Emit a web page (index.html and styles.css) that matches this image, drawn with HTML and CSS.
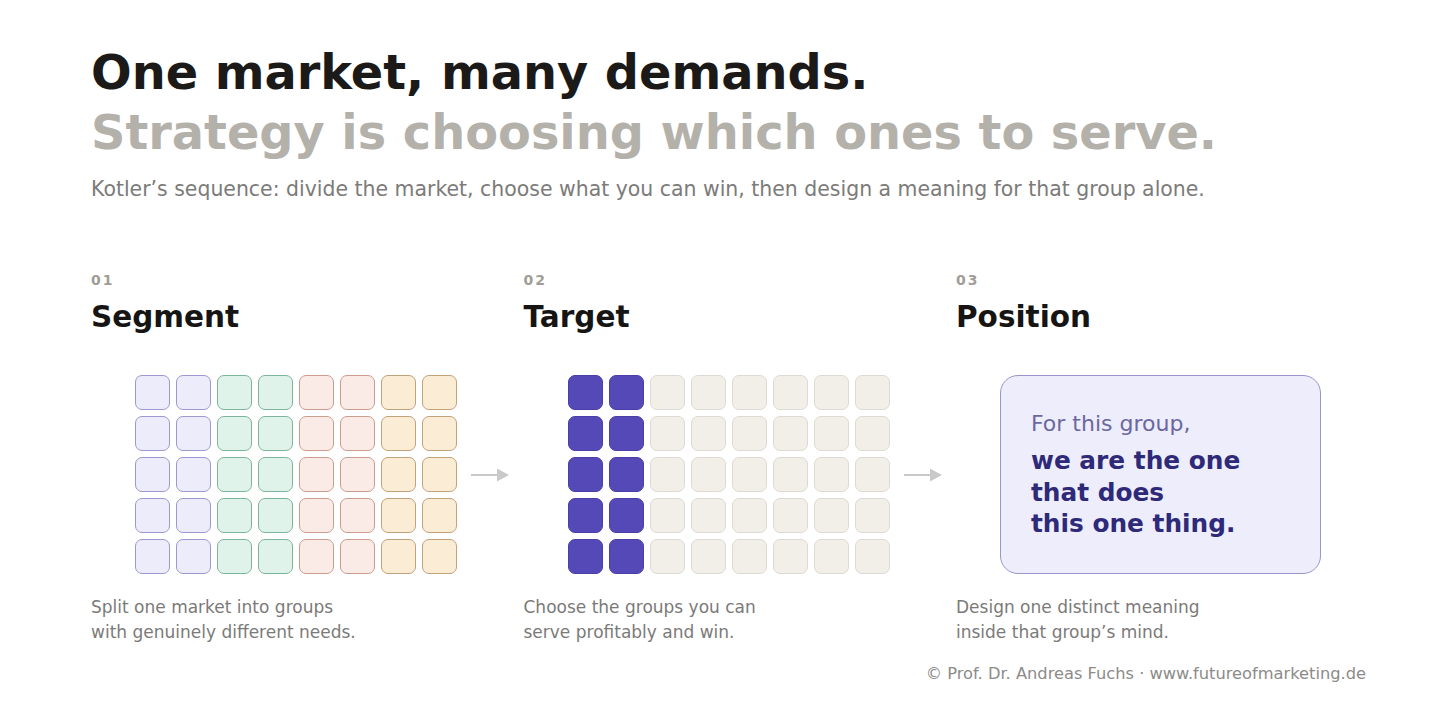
FILE: index.html
```html
<!DOCTYPE html>
<html lang="en">
<head>
<meta charset="utf-8">
<title>One market, many demands.</title>
<link rel="stylesheet" href="styles.css">
</head>
<body>
<main class="page">
  <header class="hero">
    <h1 class="headline">
      <span class="headline-main">One market, many demands.</span>
      <span class="headline-sub">Strategy is choosing which ones to serve.</span>
    </h1>
    <p class="lede">Kotler’s sequence: divide the market, choose what you can win, then design a meaning for that group alone.</p>
  </header>

  <section class="steps">
    <article class="step">
      <div class="step-num">01</div>
      <h2 class="step-title">Segment</h2>
      <div class="visual">
        <div class="cells seg">
          <i></i><i></i><i></i><i></i><i></i><i></i><i></i><i></i>
          <i></i><i></i><i></i><i></i><i></i><i></i><i></i><i></i>
          <i></i><i></i><i></i><i></i><i></i><i></i><i></i><i></i>
          <i></i><i></i><i></i><i></i><i></i><i></i><i></i><i></i>
          <i></i><i></i><i></i><i></i><i></i><i></i><i></i><i></i>
        </div>
        <svg class="arrow" width="38" height="14" viewBox="0 0 38 14" aria-hidden="true">
          <line x1="0" y1="7" x2="27" y2="7" stroke="#c9c9c9" stroke-width="2"/>
          <polygon points="26,0.5 38,7 26,13.5" fill="#c9c9c9"/>
        </svg>
      </div>
      <p class="step-desc">Split one market into groups<br>with genuinely different needs.</p>
    </article>

    <article class="step">
      <div class="step-num">02</div>
      <h2 class="step-title">Target</h2>
      <div class="visual">
        <div class="cells tgt">
          <i></i><i></i><i></i><i></i><i></i><i></i><i></i><i></i>
          <i></i><i></i><i></i><i></i><i></i><i></i><i></i><i></i>
          <i></i><i></i><i></i><i></i><i></i><i></i><i></i><i></i>
          <i></i><i></i><i></i><i></i><i></i><i></i><i></i><i></i>
          <i></i><i></i><i></i><i></i><i></i><i></i><i></i><i></i>
        </div>
        <svg class="arrow" width="38" height="14" viewBox="0 0 38 14" aria-hidden="true">
          <line x1="0" y1="7" x2="27" y2="7" stroke="#c9c9c9" stroke-width="2"/>
          <polygon points="26,0.5 38,7 26,13.5" fill="#c9c9c9"/>
        </svg>
      </div>
      <p class="step-desc">Choose the groups you can<br>serve profitably and win.</p>
    </article>

    <article class="step">
      <div class="step-num">03</div>
      <h2 class="step-title">Position</h2>
      <div class="visual">
        <div class="claim">
          <div class="claim-intro">For this group,</div>
          <div class="claim-main">we are the one<br>that does<br>this one thing.</div>
        </div>
      </div>
      <p class="step-desc">Design one distinct meaning<br>inside that group’s mind.</p>
    </article>
  </section>

  <footer class="credit">© Prof. Dr. Andreas Fuchs · www.futureofmarketing.de</footer>
</main>
</body>
</html>
```

FILE: styles.css
```css
* { box-sizing: border-box; }

html, body {
  margin: 0;
  padding: 0;
  background: #ffffff;
}

body {
  font-family: "DejaVu Sans", "Liberation Sans", sans-serif;
  color: #1a1a1a;
}

.page {
  width: 1456px;
  height: 714px;
  padding: 43px 90px 0 91px;
  display: flex;
  flex-direction: column;
  overflow: hidden;
}

.headline {
  margin: 0;
  font-size: 47.8px;
  line-height: 60px;
  font-weight: 700;
  display: flex;
  flex-direction: column;
}

.headline-main { color: #1b1a19; }
.headline-sub { color: #b4b1ab; }

.lede {
  margin: 14px 0 0;
  font-size: 20.45px;
  line-height: 25px;
  color: #7c7b79;
}

.steps {
  margin-top: 70px;
  display: grid;
  grid-template-columns: repeat(3, 410px);
  column-gap: 22.5px;
}

.step {
  display: flex;
  flex-direction: column;
}

.step-num {
  font-size: 14px;
  line-height: 16px;
  font-weight: 700;
  letter-spacing: 2px;
  color: #a09d97;
}

.step-title {
  margin: 11px 0 0;
  font-size: 29.5px;
  line-height: 36px;
  font-weight: 700;
  color: #161514;
}

.visual {
  margin-top: 40px;
  height: 199px;
  padding-left: 44px;
  display: flex;
  align-items: center;
}

.cells {
  display: grid;
  grid-template-columns: repeat(8, 35px);
  grid-auto-rows: 35px;
  gap: 6px;
  flex-shrink: 0;
}

.cells i {
  display: block;
  border-radius: 7px;
  border: 1px solid #ccc;
}

/* Segment colours, two columns per group */
.seg i:nth-child(8n+1), .seg i:nth-child(8n+2) {
  background: #ececfb;
  border-color: #9d98d2;
}
.seg i:nth-child(8n+3), .seg i:nth-child(8n+4) {
  background: #dff3ea;
  border-color: #7db59c;
}
.seg i:nth-child(8n+5), .seg i:nth-child(8n+6) {
  background: #fbebe6;
  border-color: #cc9d8f;
}
.seg i:nth-child(8n+7), .seg i:nth-child(8n+8) {
  background: #fbecd6;
  border-color: #c2a27a;
}

/* Target: first two columns chosen */
.tgt i {
  background: #f2efe9;
  border-color: #dedad3;
}
.tgt i:nth-child(8n+1), .tgt i:nth-child(8n+2) {
  background: #5549b8;
  border-color: #4a3fa9;
}

.arrow {
  flex-shrink: 0;
  margin-left: 14px;
  display: block;
}

.claim {
  width: 321px;
  height: 199px;
  flex-shrink: 0;
  background: #ededfb;
  border: 1px solid #9a95cf;
  border-radius: 18px;
  padding: 0 30px;
  display: flex;
  flex-direction: column;
  justify-content: center;
}

.claim-intro {
  font-size: 22px;
  line-height: 30px;
  color: #6b679f;
}

.claim-main {
  margin-top: 6px;
  font-size: 24.8px;
  line-height: 31.5px;
  font-weight: 700;
  color: #2e2979;
}

.step-desc {
  margin: 21px 0 0;
  font-size: 17px;
  line-height: 25px;
  color: #7b7a78;
}

.credit {
  margin-top: 19px;
  text-align: right;
  font-size: 16.25px;
  line-height: 20px;
  color: #8c8b89;
}
```
